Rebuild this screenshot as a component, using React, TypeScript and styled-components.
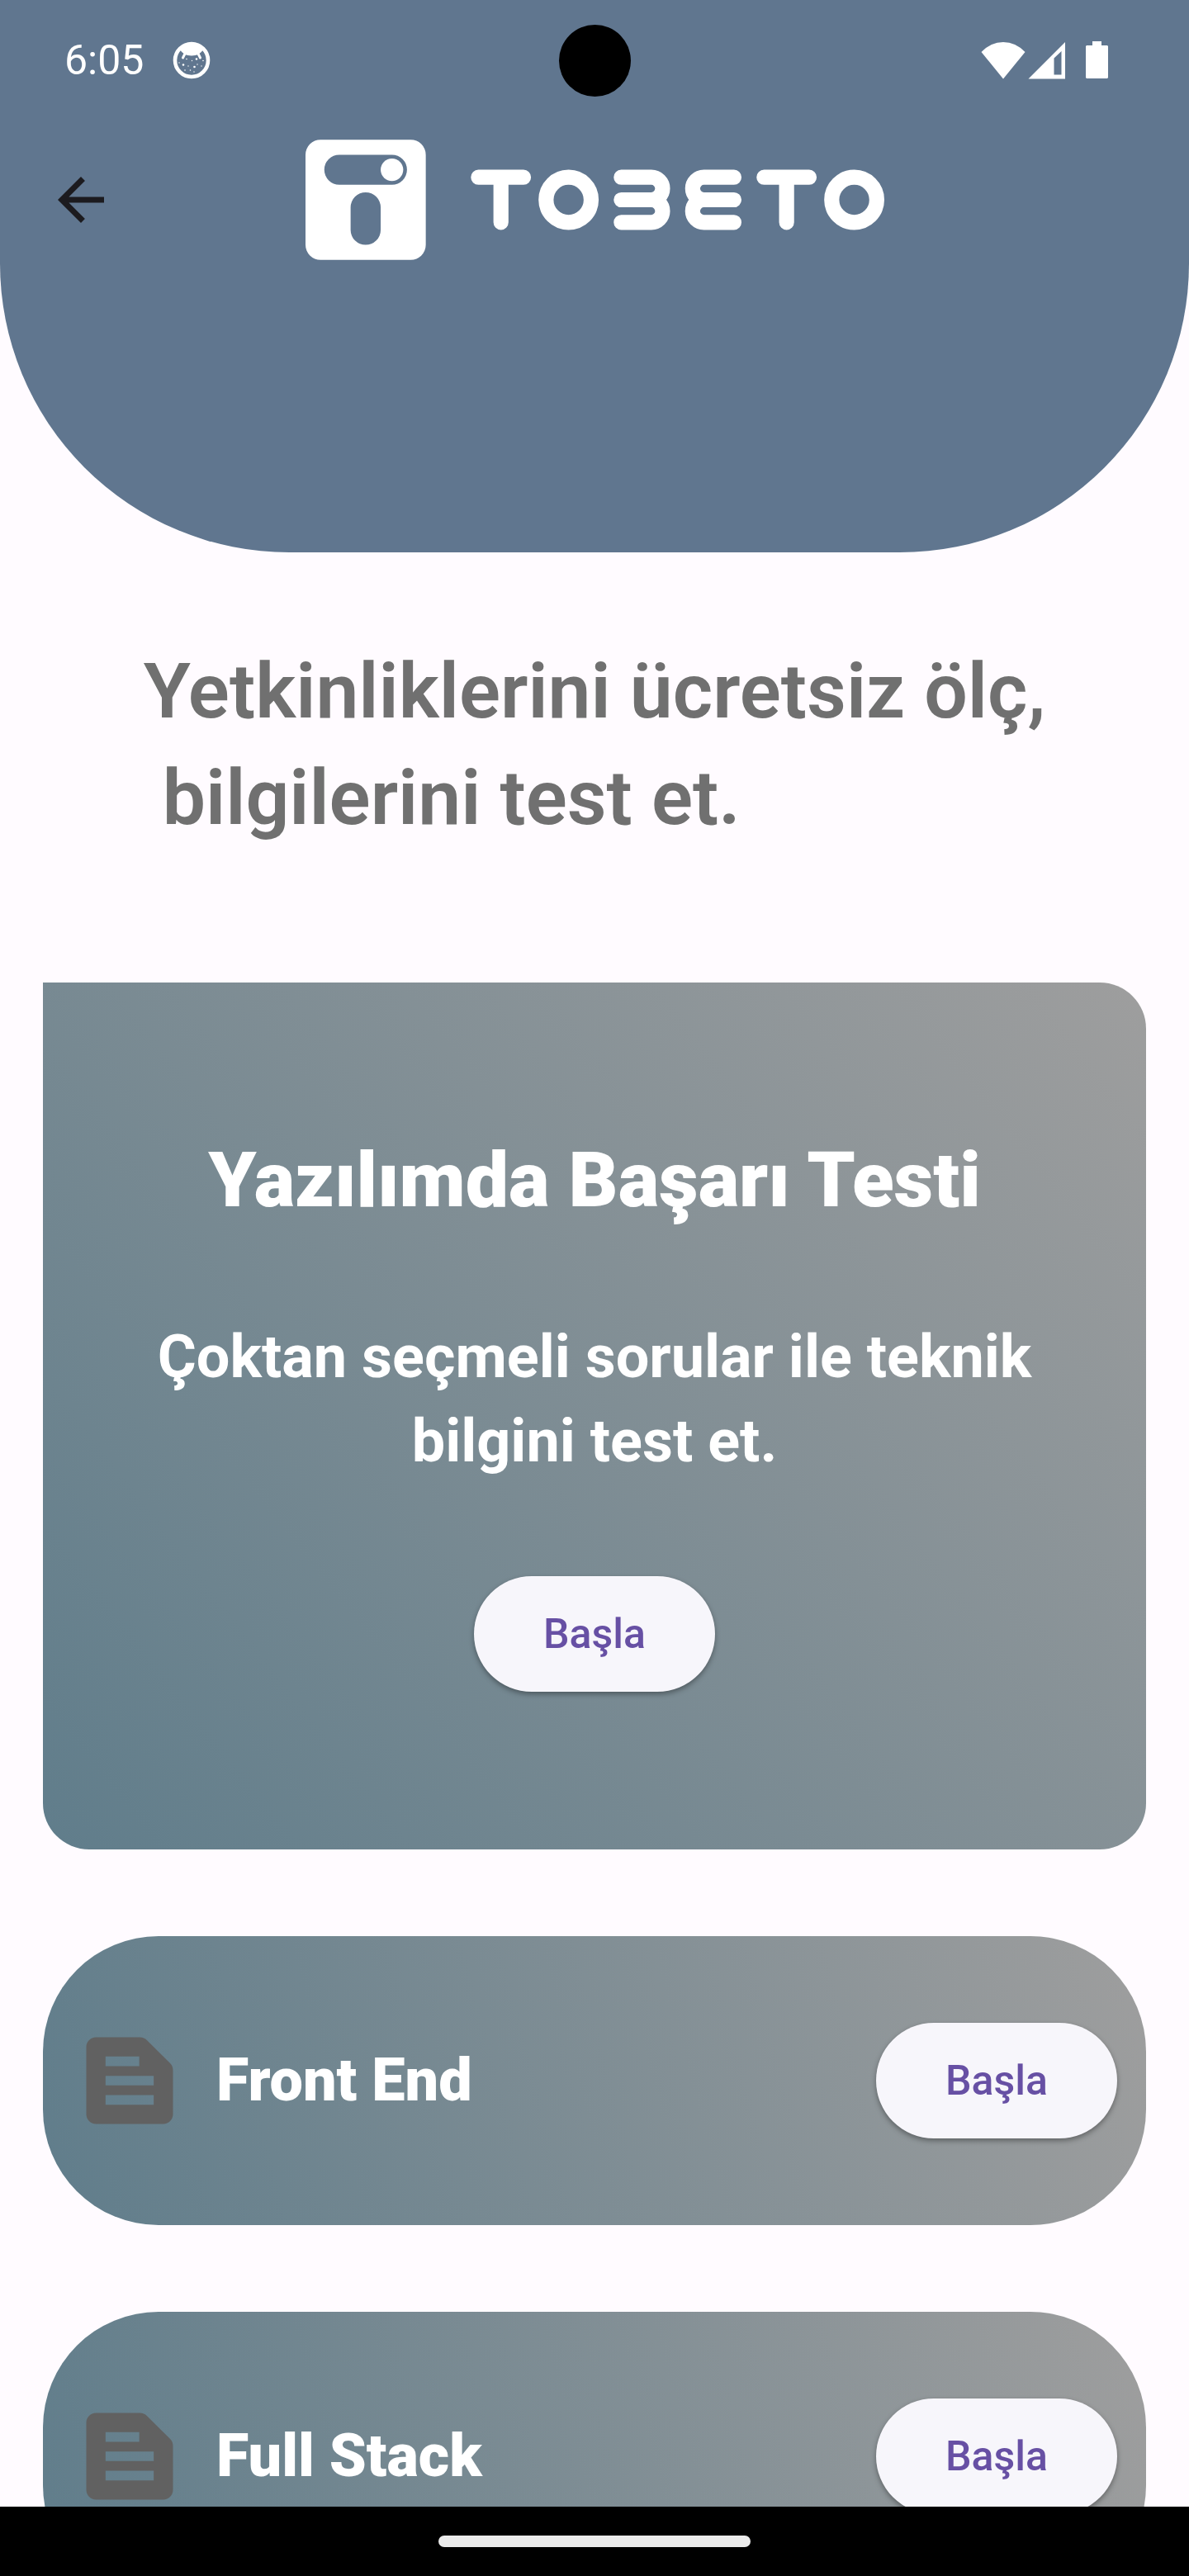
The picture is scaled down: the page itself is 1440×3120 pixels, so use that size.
import React from "react";
import styled, { createGlobalStyle } from "styled-components";

const GlobalStyle = createGlobalStyle`
  *, *::before, *::after { box-sizing: border-box; }
  body {
    margin: 0;
    background: #fffbff;
    font-family: Roboto, "Noto Sans", sans-serif;
  }
`;

const Screen = styled.div`
  display: flex;
  flex-direction: column;
  height: 100vh;
  overflow: hidden;
`;

const Header = styled.header`
  flex: none;
  padding-bottom: 331px;
  background: #60768f;
  border-radius: 0 0 350px 350px;
`;

const StatusBar = styled.div`
  display: grid;
  grid-template-columns: 1fr auto 1fr;
  align-items: center;
  height: 146px;
  padding: 0 98px 0 78px;
  color: #ffffff;
`;

const StatusGroup = styled.div<{ $end?: boolean }>`
  display: flex;
  align-items: center;
  justify-content: ${(p) => (p.$end ? "flex-end" : "flex-start")};
`;

const Clock = styled.time`
  margin-right: 35px;
  font-size: 50px;
  line-height: 60px;
`;

const Camera = styled.div`
  width: 87px;
  height: 87px;
  margin-left: 20px;
  border-radius: 50%;
  background: #000000;
`;

const StatusIcon = styled.svg<{ $gap?: number }>`
  display: block;
  margin-left: ${(p) => p.$gap ?? 0}px;
`;

const Toolbar = styled.div`
  display: grid;
  grid-template-columns: 84px 1fr 84px;
  align-items: center;
  height: 192px;
  padding: 0 56px;
`;

const BackButton = styled.button`
  display: flex;
  padding: 0;
  border: 0;
  background: none;
  color: #1c1b1f;
  cursor: pointer;
`;

const Logo = styled.svg`
  display: block;
  justify-self: center;
`;

const Main = styled.main`
  flex: 1;
  min-height: 0;
  overflow: hidden;
  padding: 104px 52px 0;
`;

const Heading = styled.h1`
  width: fit-content;
  margin: 0 auto 159px;
  color: #707070;
  font-size: 93px;
  font-weight: 600;
  line-height: 129px;
  white-space: pre;
`;

const HeroCard = styled.section`
  display: flex;
  flex-direction: column;
  align-items: center;
  height: 1050px;
  padding-top: 175px;
  border-radius: 0 56px 56px 56px;
  background: linear-gradient(52deg, #607d8b, #9e9e9e);
  color: #ffffff;
  text-align: center;
`;

const HeroTitle = styled.h2`
  margin: 0 0 98px;
  font-size: 93px;
  font-weight: 900;
  line-height: 130px;
`;

const HeroText = styled.p`
  max-width: 1120px;
  margin: 0 0 112px;
  font-size: 72px;
  font-weight: 700;
  line-height: 102px;
`;

const StartButton = styled.button`
  flex: none;
  width: 292px;
  height: 140px;
  padding: 0;
  border: 0;
  border-radius: 70px;
  background: #f7f6fb;
  box-shadow: 0 3px 6px rgba(0, 0, 0, 0.35);
  color: #6750a4;
  font-family: inherit;
  font-size: 50px;
  font-weight: 500;
  line-height: 70px;
  cursor: pointer;
`;

const TestList = styled.ul`
  display: flex;
  flex-direction: column;
  gap: 105px;
  margin: 105px 0;
  padding: 0;
  list-style: none;
`;

const TestRow = styled.li`
  display: flex;
  align-items: center;
  gap: 35px;
  height: 350px;
  padding: 0 35px;
  border-radius: 140px;
  background: linear-gradient(75deg, #607d8b, #9e9e9e);
`;

const TestName = styled.h3`
  flex: 1;
  margin: 0;
  color: #ffffff;
  font-size: 72px;
  font-weight: 900;
  line-height: 102px;
`;

const NavBar = styled.footer`
  flex: none;
  display: flex;
  align-items: center;
  justify-content: center;
  height: 84px;
  background: #000000;
`;

const HomeHandle = styled.div`
  width: 378px;
  height: 14px;
  border-radius: 7px;
  background: #ebebeb;
`;

const AppBadgeIcon = () => (
  <StatusIcon width="46" height="46" viewBox="0 0 46 46" fill="currentColor" aria-hidden="true">
    <circle cx="23" cy="23" r="20" fill="none" stroke="currentColor" strokeWidth="4.6" />
    <path d="M9 10Q14 2 23 2t14 8Q33 17.500 23 17.500T9 10Z" />
    <path d="M15.500 14l-3 6M30.500 14l3 6" stroke="currentColor" strokeWidth="3" strokeLinecap="round" />
    <circle cx="13" cy="28.500" r="1.300" />
    <circle cx="26.500" cy="31" r="1.300" />
    <circle cx="29" cy="21.500" r="1.300" />
    <circle cx="17" cy="21.500" r=".8" />
    <circle cx="23.500" cy="23.500" r=".7" />
    <circle cx="19" cy="30" r=".7" />
    <circle cx="30" cy="28" r=".7" />
    <circle cx="37" cy="23.500" r=".8" />
    <circle cx="8" cy="26" r=".7" />
    <circle cx="15" cy="35" r=".8" />
    <circle cx="21.500" cy="35" r=".8" />
    <circle cx="26" cy="37" r=".7" />
    <circle cx="35" cy="30" r=".7" />
  </StatusIcon>
);

const WifiIcon = () => (
  <StatusIcon width="54" height="46" viewBox="0 0 54 46" fill="currentColor" aria-hidden="true">
    <path d="M0.500 13Q12 1 27 1t26.500 12L27 45.500Z" />
  </StatusIcon>
);

const SignalIcon = () => (
  <StatusIcon $gap={3} width="46" height="46" viewBox="0 0 46 46" fill="currentColor" fillRule="evenodd" aria-hidden="true">
    <path d="M0.500 45.500L45 1V45.500ZM31.500 20.500V40.500H40.500V12Z" />
  </StatusIcon>
);

const BatteryIcon = () => (
  <StatusIcon $gap={24} width="27" height="46" viewBox="0 0 27 46" fill="currentColor" aria-hidden="true">
    <path d="M8 0H19V5H26L27 6V44L26 45H1L0 44V6L1 5H8Z" />
  </StatusIcon>
);

const TobetoLogo = () => (
  <Logo width="701" height="146" viewBox="0 0 77 16" role="img" aria-label="Tobeto">
    <path
      fill="#fff"
      fillRule="evenodd"
      d="M2 0H14a2 2 0 0 1 2 2V14a2 2 0 0 1-2 2H2a2 2 0 0 1-2-2V2a2 2 0 0 1 2-2ZM4.500 2a2 2 0 0 0 0 4h7a2 2 0 0 0 0-4ZM8 7a2 2 0 0 0-2 2v3a2 2 0 0 0 4 0V9a2 2 0 0 0-2-2Z"
    />
    <circle cx="11.500" cy="4" r="1.500" fill="#fff" />
    <g fill="none" stroke="#fff" strokeWidth="2" strokeLinecap="round">
      <path d="M23 5H29M26 5V11" />
      <circle cx="35" cy="8" r="3" />
      <path d="M42 5H46a1.500 1.500 0 0 1 0 3H42M46 8a1.500 1.500 0 0 1 0 3H42" />
      <path d="M57 5H53a1.500 1.500 0 0 0 0 3H57M53 8a1.500 1.500 0 0 0 0 3H57" />
      <path d="M61 5H67M64 5V11" />
      <circle cx="73" cy="8" r="3" />
    </g>
  </Logo>
);

const BackIcon = () => (
  <svg width="84" height="84" viewBox="0 0 24 24" fill="currentColor" aria-hidden="true">
    <path d="M20 11H7.830l5.590-5.590L12 4l-8 8 8 8 1.410-1.410L7.830 13H20v-2z" />
  </svg>
);

const SnippetIcon = () => (
  <svg width="140" height="140" viewBox="0 0 24 24" fill="#616161" aria-hidden="true">
    <path d="M20.410 8.410l-4.830-4.830c-.37-.37-.88-.58-1.410-.58H5c-1.100 0-2 .9-2 2v14c0 1.100.9 2 2 2h14c1.100 0 2-.9 2-2V9.830c0-.53-.21-1.040-.59-1.420zM7 7h7v2H7V7zm10 10H7v-2h10v2zm0-4H7v-2h10v2z" />
  </svg>
);

const tests = ["Front End", "Full Stack"];

export default function App() {
  return (
    <Screen>
      <GlobalStyle />
      <Header>
        <StatusBar>
          <StatusGroup>
            <Clock>6:05</Clock>
            <AppBadgeIcon />
          </StatusGroup>
          <Camera />
          <StatusGroup $end>
            <WifiIcon />
            <SignalIcon />
            <BatteryIcon />
          </StatusGroup>
        </StatusBar>
        <Toolbar>
          <BackButton type="button" aria-label="Geri">
            <BackIcon />
          </BackButton>
          <TobetoLogo />
        </Toolbar>
      </Header>
      <Main>
        <Heading>{"Yetkinliklerini ücretsiz ölç,\n bilgilerini test et."}</Heading>
        <HeroCard>
          <HeroTitle>Yazılımda Başarı Testi</HeroTitle>
          <HeroText>Çoktan seçmeli sorular ile teknik bilgini test et.</HeroText>
          <StartButton type="button">Başla</StartButton>
        </HeroCard>
        <TestList>
          {tests.map((name) => (
            <TestRow key={name}>
              <SnippetIcon />
              <TestName>{name}</TestName>
              <StartButton type="button">Başla</StartButton>
            </TestRow>
          ))}
        </TestList>
      </Main>
      <NavBar>
        <HomeHandle />
      </NavBar>
    </Screen>
  );
}
